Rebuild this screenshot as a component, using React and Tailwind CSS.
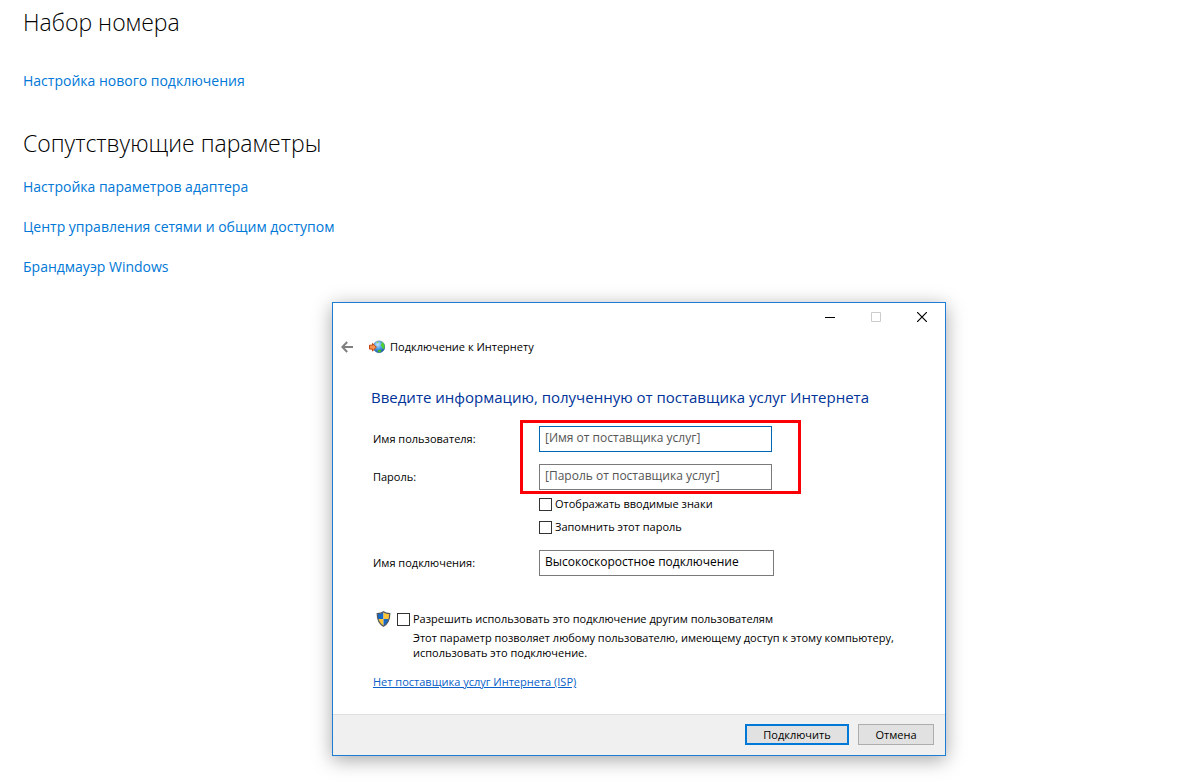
import { useState } from "react";

const relatedLinks = [
  "Настройка параметров адаптера",
  "Центр управления сетями и общим доступом",
  "Брандмауэр Windows",
];

function BackIcon() {
  return (
    <svg className="h-3 w-3" viewBox="0 0 12 12" fill="none" stroke="#808080" strokeWidth="2">
      <path d="M12 6H1.500M6.200 1L1.300 6l4.900 5" />
    </svg>
  );
}

function GlobeIcon() {
  return (
    <svg className="h-4 w-4" viewBox="0 0 16 16">
      <defs>
        <radialGradient id="ocean" cx="0.4" cy="0.3" r="0.75">
          <stop offset="0" stopColor="#c4e8ff" />
          <stop offset="0.5" stopColor="#4a9fe8" />
          <stop offset="1" stopColor="#1548a5" />
        </radialGradient>
      </defs>
      <circle cx="10" cy="7.800" r="5.900" fill="url(#ocean)" stroke="#2a5f96" strokeWidth="0.5" />
      <path d="M12 2.500c1.800.7 3.200 2.200 3.500 4 .2 1.400 0 2.700-.8 3.800l-1.200-.6-.4-1.900-1.300-.8.2-1.700 1-.9z" fill="#4fd12f" />
      <path d="M9 11l2.300-.5 1.200 1.100-.8 1.700c-1.200.1-2.200-.1-3.100-.6z" fill="#3db82c" />
      <path d="M7 3.600l1.700-1.100 1 .7-1.300 1.300z" fill="#8edb63" />
      <path d="M.5 6.200h3V4.400L7.400 8.200l-3.900 3.800v-1.900h-3z" fill="#f79450" stroke="#c4440f" strokeWidth="1" />
    </svg>
  );
}

function ShieldIcon() {
  return (
    <svg className="h-4 w-[15px]" viewBox="0 0 15 16">
      <defs>
        <clipPath id="shield">
          <path d="M7.500 1c1.700 1.300 3.800 1.800 6 1.800 0 5.600-1.300 9.600-6 12.200-4.700-2.600-6-6.600-6-12.200 2.200 0 4.300-.5 6-1.800z" />
        </clipPath>
      </defs>
      <g clipPath="url(#shield)">
        <rect width="7.500" height="8" fill="#1668c4" />
        <rect x="7.500" width="7.500" height="8" fill="#fcc436" />
        <rect y="8" width="7.500" height="8" fill="#fcc436" />
        <rect x="7.500" y="8" width="7.500" height="8" fill="#1668c4" />
      </g>
      <path
        d="M7.500.8c1.700 1.300 3.900 1.800 6.300 1.800 0 5.900-1.400 10-6.300 12.700-4.900-2.700-6.300-6.800-6.300-12.700 2.400 0 4.600-.5 6.300-1.800z"
        fill="none"
        stroke="#51565c"
        strokeWidth="1.200"
      />
    </svg>
  );
}

function CheckBox({ id, children }) {
  const [checked, setChecked] = useState(false);

  return (
    <div className="flex h-5 items-center gap-[3px]">
      <input
        id={id}
        type="checkbox"
        checked={checked}
        onChange={e => setChecked(e.target.checked)}
        className="size-[13px] appearance-none border border-[#333333] bg-white checked:bg-[#0078d7]"
      />
      <label htmlFor={id}>{children}</label>
    </div>
  );
}

function WindowControls() {
  return (
    <div className="flex h-7 justify-end">
      <button type="button" aria-label="Свернуть" className="flex w-[46px] items-center justify-center">
        <svg className="size-[10px]" viewBox="0 0 10 10" stroke="#000000">
          <path d="M0 5.500h10" />
        </svg>
      </button>
      <button type="button" aria-label="Развернуть" disabled className="flex w-[46px] items-center justify-center">
        <svg className="size-[10px]" viewBox="0 0 10 10" fill="none" stroke="#cccccc">
          <path d="M.5.5h9v9h-9z" />
        </svg>
      </button>
      <button type="button" aria-label="Закрыть" className="flex w-[46px] items-center justify-center">
        <svg className="size-[10px]" viewBox="0 0 10 10" stroke="#000000" strokeWidth="1.200">
          <path d="M0 0l10 10M10 0L0 10" />
        </svg>
      </button>
    </div>
  );
}

function ConnectDialog() {
  const [user, setUser] = useState("");
  const [password, setPassword] = useState("");
  const [name, setName] = useState("Высокоскоростное подключение");

  return (
    <form
      onSubmit={e => e.preventDefault()}
      className="w-[614px] border border-[#1a7fd4] bg-white text-[11px] leading-4 text-black shadow-[0_4px_18px_rgba(0,0,0,0.35)]"
    >
      <WindowControls />
      <div className="flex h-8 items-center pl-2">
        <button type="button" aria-label="Назад" className="mr-4">
          <BackIcon />
        </button>
        <GlobeIcon />
        <span className="ml-[5px]">Подключение к Интернету</span>
      </div>

      <h2 className="mt-[22px] pl-[38px] text-[15px] leading-6 text-[#003399]">
        Введите информацию, полученную от поставщика услуг Интернета
      </h2>

      <div className="mt-[17px] pr-6 pl-10">
        <div className="relative grid grid-cols-[166px_233px] items-center gap-y-3">
          <label htmlFor="user">Имя пользователя:</label>
          <input
            id="user"
            value={user}
            onChange={e => setUser(e.target.value)}
            placeholder="[Имя от поставщика услуг]"
            className="h-[26px] border border-[#0067b8] px-[5px] pb-1 text-xs placeholder:text-[#555555] focus:outline-none"
          />
          <label htmlFor="password">Пароль:</label>
          <input
            id="password"
            type="password"
            value={password}
            onChange={e => setPassword(e.target.value)}
            placeholder="[Пароль от поставщика услуг]"
            className="h-[26px] border border-[#7a7a7a] px-[5px] pb-1 text-xs placeholder:text-[#555555] focus:outline-none"
          />
          <div className="pointer-events-none absolute -top-[6px] -bottom-1 left-[147px] w-[281px] border-3 border-[#fb0007]" />
        </div>

        <div className="mt-1 flex flex-col gap-[3px] pl-[166px]">
          <CheckBox id="show">Отображать вводимые знаки</CheckBox>
          <CheckBox id="remember">Запомнить этот пароль</CheckBox>
        </div>

        <div className="mt-[13px] grid grid-cols-[166px_235px] items-center">
          <label htmlFor="name">Имя подключения:</label>
          <input
            id="name"
            value={name}
            onChange={e => setName(e.target.value)}
            className="h-[26px] border border-[#7a7a7a] px-[5px] pb-1 text-xs focus:outline-none"
          />
        </div>

        <div className="mt-[33px] flex items-center gap-[6px] pl-[3px]">
          <ShieldIcon />
          <CheckBox id="share">Разрешить использовать это подключение другим пользователям</CheckBox>
        </div>
        <p className="mt-px pl-10 leading-[15px]">
          Этот параметр позволяет любому пользователю, имеющему доступ к этому компьютеру,
          использовать это подключение.
        </p>
        <a href="#isp" className="mt-3 block w-fit leading-5 text-[#0a5fc8] underline">
          Нет поставщика услуг Интернета (ISP)
        </a>
      </div>

      <div className="mt-[22px] flex justify-end gap-[9px] border-t border-[#dfdfdf] bg-[#f0f0f0] pt-[9px] pr-[11px] pb-[10px]">
        <button type="submit" className="h-[21px] w-[104px] border-2 border-[#0078d7] bg-[#e1e1e1]">
          Подключить
        </button>
        <button type="button" className="h-[21px] w-[76px] border border-[#adadad] bg-[#e1e1e1]">
          Отмена
        </button>
      </div>
    </form>
  );
}

function App() {
  return (
    <main className="bg-white pt-[6px] pb-7 pl-[23px] font-['Open_Sans','Noto_Sans',sans-serif] text-black">
      <h1 className="text-[23px] leading-8 font-light">Набор номера</h1>
      <a href="#new" className="mt-[33px] block w-fit text-sm text-[#0078d7]">
        Настройка нового подключения
      </a>

      <h1 className="mt-9 text-[23px] leading-8 font-light">Сопутствующие параметры</h1>
      <nav className="mt-[18px] flex flex-col items-start gap-5">
        {relatedLinks.map(text => (
          <a key={text} href="#related" className="text-sm text-[#0078d7]">
            {text}
          </a>
        ))}
      </nav>

      <div className="mt-[25px] pl-[309px]">
        <ConnectDialog />
      </div>
    </main>
  );
}

export default App;
